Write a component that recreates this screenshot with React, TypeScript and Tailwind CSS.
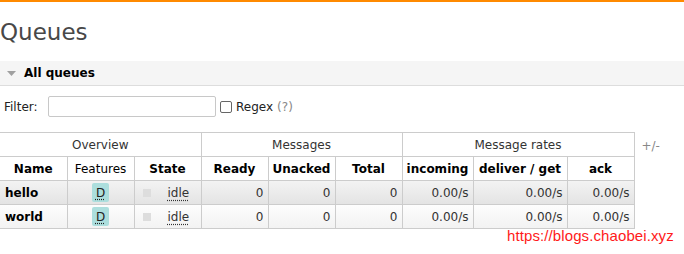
import React from 'react';

// queue rows shown in the overview table
const queues = [
  { name: 'hello', alt: 'bg-gradient-to-b from-[#f3f3f3] to-[#e3e3e3]' },
  { name: 'world', alt: 'bg-gradient-to-b from-[#fdfdfd] to-[#f2f2f2]' },
];

const cell = 'border border-[#cccccc] h-6 px-1 leading-none';

export default function App() {
  return (
    <div className="relative h-[254px] w-[684px] overflow-hidden bg-white font-['DejaVu_Sans',Verdana,sans-serif] text-[12px] text-[#222]">
      <div className="h-[2px] bg-[#ff8a00]" />

      <h1 className="mt-[16px] h-[28px] text-[23px] leading-[28px] text-[#484848]">Queues</h1>

      {/* All queues section bar */}
      <div className="mt-[15px] flex h-[25px] items-center border-b border-[#dddddd] bg-[#f5f5f5]">
        <svg width="9" height="5" viewBox="0 0 9 5" className="ml-[7px] mt-[1px]">
          <polygon points="0,0 9,0 4.5,5" fill="#a0a0a0" />
        </svg>
        <span className="ml-[8px] font-bold text-black">All queues</span>
      </div>

      {/* Filter */}
      <div className="mt-[10px] flex h-[21px] items-center">
        <span className="ml-[4px] w-[44px]">Filter:</span>
        <input className="h-[21px] w-[168px] rounded-[2px] border border-[#c8c8c8] bg-white" />
        <span className="ml-[4px] inline-block h-[12px] w-[12px] rounded-[2px] border border-[#666]" />
        <span className="ml-[4px]">Regex</span>
        <span className="ml-[4px] text-[#888]">(?)</span>
      </div>

      <div className="mt-[15px] flex items-start">
        <table className="table-fixed border-collapse">
          <colgroup>
            <col className="w-[67px]" />
            <col className="w-[67px]" />
            <col className="w-[67px]" />
            <col className="w-[67px]" />
            <col className="w-[67px]" />
            <col className="w-[67px]" />
            <col className="w-[71px]" />
            <col className="w-[94px]" />
            <col className="w-[67px]" />
          </colgroup>
          <thead>
            <tr>
              <th colSpan={3} className={`${cell} font-normal text-[#333] border-l-0`}>Overview</th>
              <th colSpan={3} className={`${cell} font-normal text-[#333]`}>Messages</th>
              <th colSpan={3} className={`${cell} font-normal text-[#333]`}>Message rates</th>
            </tr>
            <tr className="font-bold text-black">
              <th className={`${cell} border-l-0`}>Name</th>
              <th className={`${cell} font-normal`}>Features</th>
              <th className={cell}>State</th>
              <th className={cell}>Ready</th>
              <th className={cell}>Unacked</th>
              <th className={cell}>Total</th>
              <th className={cell}>incoming</th>
              <th className={cell}>deliver / get</th>
              <th className={cell}>ack</th>
            </tr>
          </thead>
          <tbody>
            {queues.map((q) => (
              <tr key={q.name} className={q.alt}>
                <td className={`${cell} border-l-0 pl-[5px] font-bold text-black`}>{q.name}</td>
                <td className={`${cell} text-center`}>
                  <span className="inline-flex h-[19px] w-[17px] items-center justify-center rounded-[2px] bg-[#acdedd]">
                    <abbr className="underline decoration-dotted underline-offset-[2px]">D</abbr>
                  </span>
                </td>
                <td className={cell}>
                  <div className="flex items-center">
                    <span className="ml-[4px] inline-block h-[8px] w-[8px] bg-[#dddddd]" />
                    <abbr className="ml-[17px] text-[#333] underline decoration-dotted underline-offset-[3px]">idle</abbr>
                  </div>
                </td>
                <td className={`${cell} text-right text-[#333]`}>0</td>
                <td className={`${cell} text-right text-[#333]`}>0</td>
                <td className={`${cell} text-right text-[#333]`}>0</td>
                <td className={`${cell} text-right text-[#333]`}>0.00/s</td>
                <td className={`${cell} text-right text-[#333]`}>0.00/s</td>
                <td className={`${cell} text-right text-[#333]`}>0.00/s</td>
              </tr>
            ))}
          </tbody>
        </table>
        <span className="ml-[7px] mt-[5px] text-[#888]">+/-</span>
      </div>

      {/* next collapsed section, cut off by the window */}
      <div className="mt-[20px] flex h-[25px] items-center">
        <svg width="5" height="9" viewBox="0 0 5 9" className="ml-[9px]">
          <polygon points="0,0 5,4.5 0,9" fill="#a0a0a0" />
        </svg>
        <span className="ml-[10px] font-bold text-black">Add a new queue</span>
      </div>

      {/* watermark */}
      <div className="absolute left-[507px] top-[227px] font-['Liberation_Sans',Arial,sans-serif] text-[15px] leading-[18px] tracking-[0.1px] text-[#ff1a1a]">
        https://blogs.chaobei.xyz
      </div>
    </div>
  );
}
